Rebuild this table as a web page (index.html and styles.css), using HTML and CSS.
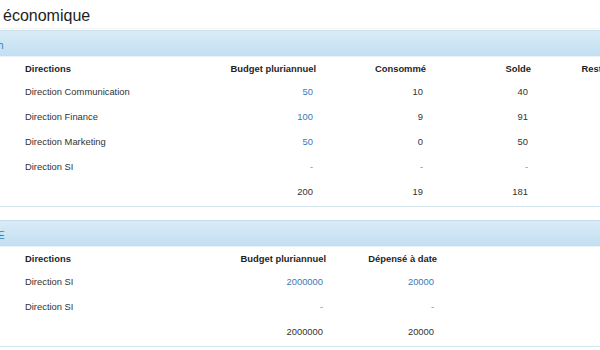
FILE: index.html
```html
<!DOCTYPE html>
<html lang="fr">
<head>
<meta charset="utf-8">
<title>Suivi économique</title>
<link rel="stylesheet" href="styles.css">
</head>
<body>
<div class="page">
  <h1 class="title">économique</h1>

  <section class="block">
    <div class="banner"><span class="banner-label">h</span></div>
    <table class="grid grid-one">
      <colgroup>
        <col class="c-dir"><col class="c-budget"><col class="c-cons"><col class="c-solde"><col class="c-reste">
      </colgroup>
      <thead>
        <tr><th class="left">Directions</th><th>Budget pluriannuel</th><th>Consommé</th><th>Solde</th><th>Reste à engager</th></tr>
      </thead>
      <tbody>
        <tr><td class="left">Direction Communication</td><td class="link">50</td><td>10</td><td>40</td><td></td></tr>
        <tr><td class="left">Direction Finance</td><td class="link">100</td><td>9</td><td>91</td><td></td></tr>
        <tr><td class="left">Direction Marketing</td><td class="link">50</td><td>0</td><td>50</td><td></td></tr>
        <tr><td class="left">Direction SI</td><td class="dash">-</td><td class="dash">-</td><td class="dash">-</td><td></td></tr>
        <tr><td class="left"></td><td>200</td><td>19</td><td>181</td><td></td></tr>
      </tbody>
    </table>
  </section>

  <section class="block">
    <div class="banner"><span class="banner-label">E</span></div>
    <table class="grid grid-two">
      <colgroup>
        <col class="c-dir"><col class="c-budget2"><col class="c-dep"><col class="c-fill">
      </colgroup>
      <thead>
        <tr><th class="left">Directions</th><th>Budget pluriannuel</th><th>Dépensé à date</th><th></th></tr>
      </thead>
      <tbody>
        <tr><td class="left">Direction SI</td><td class="link">2000000</td><td class="link">20000</td><td></td></tr>
        <tr><td class="left">Direction SI</td><td class="dash">-</td><td class="dash">-</td><td></td></tr>
        <tr><td class="left"></td><td>2000000</td><td>20000</td><td></td></tr>
      </tbody>
    </table>
  </section>
</div>
</body>
</html>
```

FILE: styles.css
```css
html, body {
  margin: 0;
  padding: 0;
  overflow: hidden;
  background: #ffffff;
}

body {
  font-family: "Liberation Sans", Arial, Helvetica, sans-serif;
  color: #333333;
  width: 600px;
}

.page {
  width: 700px;
}

.title {
  margin: 0 0 1px 0;
  padding: 4px 0 0 3px;
  height: 24px;
  line-height: 24px;
  font-size: 16px;
  font-weight: normal;
  color: #1e1e1e;
  border-bottom: 1px solid #f7f1ea;
}

.block {
  margin-bottom: 13px;
  border-bottom: 1px solid #d3e5ef;
  padding-bottom: 2px;
}

.banner {
  height: 25px;
  line-height: 25px;
  border-top: 1px solid #c8dfee;
  background: linear-gradient(to bottom, #d9ebf7 0%, #c2dff1 100%);
  box-shadow: 0 1px 0 #e9f4fa;
}

.banner-label {
  display: inline-block;
  margin-left: -2px;
  font-size: 10px;
  color: #3d7cb3;
}

.grid {
  margin-top: 2px;
  border-collapse: collapse;
  table-layout: fixed;
  font-size: 9.4px;
}

.grid-one { width: 658px; }
.grid-two { width: 700px; }

.c-dir { width: 200px; }
.c-budget { width: 120px; }
.c-cons { width: 110px; }
.c-solde { width: 105px; }
.c-reste { width: 123px; }

.c-budget2 { width: 130px; }
.c-dep { width: 111px; }
.c-fill { width: 259px; }

.grid th {
  height: 21px;
  padding: 0 4px 0 0;
  text-align: right;
  font-weight: bold;
  color: #1f1f1f;
  white-space: nowrap;
  vertical-align: middle;
}

.grid td {
  height: 25px;
  padding: 0 7px 0 0;
  text-align: right;
  white-space: nowrap;
  vertical-align: middle;
  color: #333333;
}

.grid .left {
  text-align: left;
  padding-left: 25px;
}

.grid td.link {
  color: #3b7ab5;
}

.grid td.dash {
  color: #8a8a8a;
}
```
